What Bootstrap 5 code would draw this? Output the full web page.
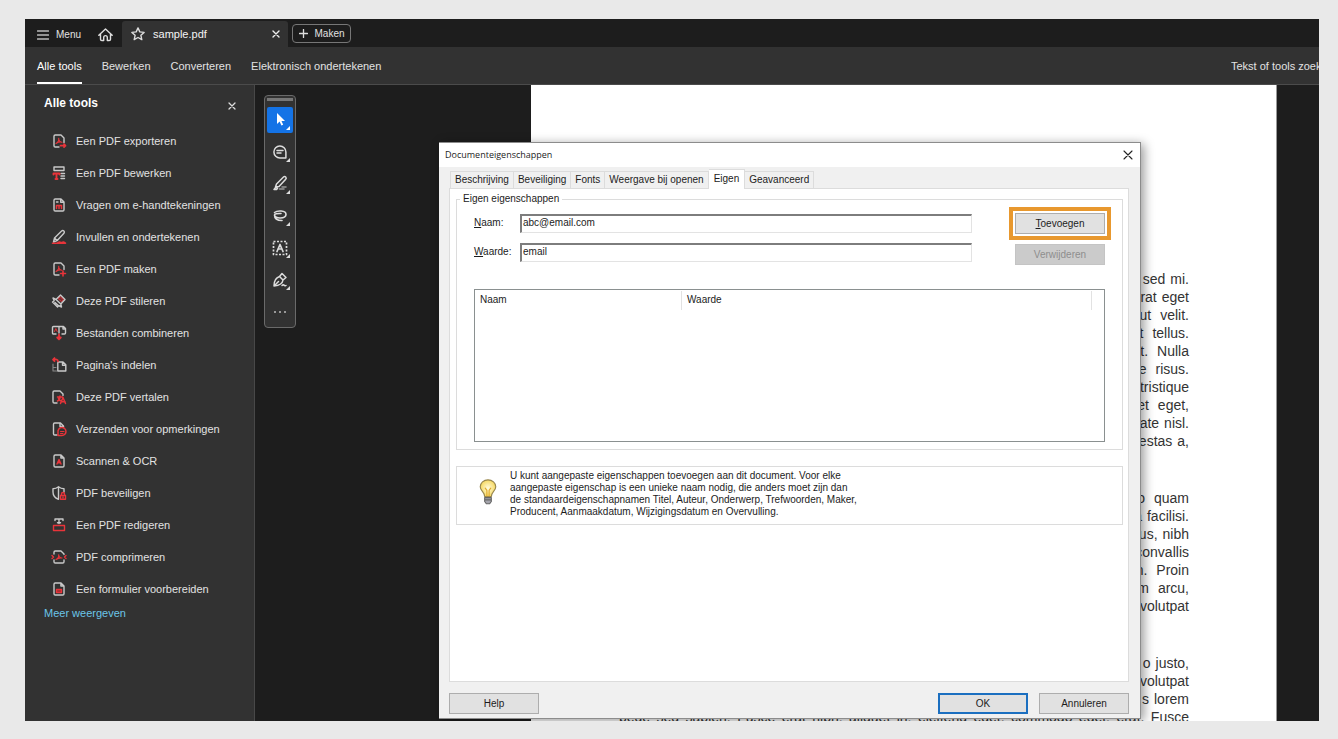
<!DOCTYPE html>
<html lang="nl">
<head>
<meta charset="utf-8">
<meta name="viewport" content="width=device-width, initial-scale=1">
<title>sample.pdf</title>
<link rel="stylesheet" href="https://cdn.jsdelivr.net/npm/bootstrap@5.3.0/dist/css/bootstrap.min.css">
<style>
:root { --panel: #323232; --dark: #1d1d1d; --line: #4b4b4b; --soft: #dcdcdc; }
body { background: #e9e9e9; font-family: "Liberation Sans", Arial, sans-serif; font-size: 11px; line-height: 16px; padding: 19px 19px 18px 25px; color: #e2e2e2; }
button, input { font-family: inherit; }
svg { display: block; flex: none; fill: none; stroke-linecap: round; stroke-linejoin: round; }
.bare { background: none; border: 0; padding: 0; color: inherit; }
a { color: inherit; text-decoration: none; }
.app { background: var(--dark); }
/* window tabs */
.tabstrip { height: 28px; background: var(--dark); font-size: 10px; padding-left: 12px; }
.tabstrip .bare { gap: 7px; }
.doc-tab { width: 166px; height: 26px; background: var(--panel); padding: 0 8px 0 9px; font-size: 11px; color: #f4f4f4; border-radius: 3px 3px 0 0; }
.make-btn { height: 19px; width: 59px; border: 1px solid #777; border-radius: 4px; font-size: 10px; }
/* menu row */
.menurow { height: 38px; background: var(--panel); border-bottom: 1px solid var(--line); padding-left: 12px; gap: 20px; }
.menurow a { padding-top: 11px; height: 37px; white-space: nowrap; }
.menurow a.current { border-bottom: 2px solid #fff; color: #fff; }
.find { width: 88px; padding-top: 11px; overflow: hidden; white-space: nowrap; }
/* tools panel */
.tools { width: 230px; background: var(--panel); border-right: 1px solid #484848; }
.tools-head { padding: 10px 18px 0 19px; height: 40px; }
.tools-head h1 { font-size: 12px; line-height: 16px; font-weight: 700; color: #fff; }
.tools-head .bare { height: 21px; }
.tool { height: 32px; padding-left: 26px; gap: 9px; }
.tool svg { stroke-width: 1.4; }
.more { color: #6cc5e8; padding-left: 19px; }
.g { stroke: #c9c9c9; }
.r { stroke: #e8343a; }
/* quick toolbar */
.quick { top: 10px; left: 9px; width: 32px; border: 1px solid #6a6a6a; background: var(--panel); border-radius: 4px; padding-top: 2px; }
.grip { width: 26px; height: 3px; background: #777; margin-bottom: 6px; }
.quick button { width: 26px; height: 26px; margin-bottom: 6px; }
.quick button:last-child { margin-bottom: 2px; }
.quick button.on { background: #1473e6; border-radius: 2px; }
/* page */
.sheet { margin: 0 42px 0 276px; background: #fff; padding: 185px 87px 0 88px; color: #333; font-size: 14px; line-height: 18px; border-right: 1px solid #999; }
.sheet p { margin-bottom: 39px; white-space: nowrap; }
.sheet .ln { display: flex; justify-content: end; gap: 5px; }
.sheet .w { gap: 9px; }
.sheet .full { display: flex; justify-content: space-between; gap: 0; }
/* dialog */
.dlg { top: 123px; right: 178px; width: 702px; background: #f0f0f0; color: #1c1c1c; font-size: 10px; line-height: 12px; border: 1px solid #8c8c8c; border-left: 0; box-shadow: 3px 2px 10px rgba(0,0,0,.4); }
.dlg-title { height: 24px; background: #fff; padding: 0 7px 0 6px; font-family: "Open Sans", sans-serif; font-size: 9px; }
.dlg-body { padding: 2px 11px 4px 10px; }
.sheet-tabs { height: 19px; padding-left: 1px; }
.sheet-tabs button { height: 17px; border: 1px solid var(--soft); border-width: 1px 1px 0 0; background: #f0f0f0; padding: 0 4px; white-space: nowrap; color: inherit; }
.sheet-tabs button:first-child { border-left-width: 1px; }
.sheet-tabs button.on { height: 20px; margin-bottom: -1px; background: #fff; padding: 0 5px 2px; }
.pane { background: #fff; border: 1px solid var(--soft); padding: 10px 5px 0 6px; height: 494px; }
.group { border: 1px solid var(--soft); height: 251px; position: relative; padding: 14px 17px 0 17px; }
.group .cap { position: absolute; top: -7px; left: 3px; padding: 0 3px; background: #fff; font-size: 10px; line-height: 12px; width: auto; margin: 0; }
.field { height: 18px; margin-bottom: 11px; }
.field label { width: 46px; }
.field input { flex: 1; height: 19px; border: 1px solid #e3e3e3; border-top: 2px solid #7d7d7d; border-left: 2px solid #7d7d7d; padding: 0 1px 2px; font-size: 10px; color: #1c1c1c; border-radius: 0; outline: 0; background: #fff; }
.fields { width: 498px; }
.winbtn { width: 90px; height: 21px; border: 1px solid #adadad; border-radius: 0; background: #e1e1e1; padding: 0; font-size: 10px; color: #1c1c1c; }
.winbtn:disabled { background: #cbcbcb; border-color: #c4c4c4; color: #8e8e8e; }
.winbtn.default { border: 2px solid #1b6fc0; }
.ring { border: 4px solid #e8982e; padding: 2px; margin: -7px -6px 0 0; }
.listbox { border: 1px solid #8a9090; height: 153px; padding: 1px 12px 0 0; margin-top: 17px; }
.listbox th { font-weight: 400; height: 19px; border-right: 1px solid #e2e2e2; padding: 0 5px 2px; }
.listbox .key { width: 33.5%; }
.tip { border: 1px solid var(--soft); margin-top: 16px; height: 59px; padding: 3px 21px; gap: 12px; white-space: nowrap; }
.foot { padding-top: 11px; gap: 11px; }
</style>
</head>
<body class="vh-100 d-flex flex-column overflow-hidden">
<div class="app position-relative flex-grow-1 d-flex flex-column overflow-hidden">
  <header>
    <div class="tabstrip d-flex">
      <button class="bare d-flex align-items-center pt-1"><svg width="12" height="12" viewBox="0 0 12 12" stroke="#bbb" stroke-width="1.3"><path d="M.5 2h11M.5 6h11M.5 10h11"/></svg>Menu</button>
      <button class="bare ms-3 me-2 pt-1" aria-label="Start"><svg width="17" height="16" viewBox="0 0 16 16" stroke="#ddd" stroke-width="1.4"><path d="M1.3 8.2 8 2l6.7 6.2M3 7v5.2c0 .8.5 1.3 1.3 1.300h1.900V10.400a1.800 1.800 0 0 1 3.600 0v3.100h1.900c.8 0 1.300-.5 1.300-1.300V7"/></svg></button>
      <div class="doc-tab d-flex align-items-center mt-auto">
        <svg width="14" height="14" viewBox="0 0 14 14" stroke="#ddd" stroke-width="1.4"><path d="m7 .9 1.800 4 4.300.5-3.200 2.900.9 4.300L7 10.500l-3.800 2.100.9-4.300L.9 5.400l4.300-.5z"/></svg>
        <span class="ms-1 ps-1 flex-grow-1">sample.pdf</span>
        <button class="bare" aria-label="Sluiten"><svg width="8" height="8" viewBox="0 0 8 8" stroke="#eee" stroke-width="1.400"><path d="m1 1 6 6M7 1 1 7"/></svg></button>
      </div>
      <button class="bare make-btn d-flex align-items-center justify-content-center ms-1 mt-auto mb-1"><svg width="9" height="9" viewBox="0 0 8 8" stroke="#ddd" stroke-width="1.200"><path d="M4 .5v7M.5 4h7"/></svg>Maken</button>
    </div>
    <nav class="menurow d-flex">
      <a class="current" href="#">Alle tools</a><a href="#">Bewerken</a><a href="#">Converteren</a><a href="#">Elektronisch ondertekenen</a>
      <span class="find ms-auto">Tekst of tools zoek</span>
    </nav>
  </header>
  <div class="d-flex flex-grow-1 overflow-hidden">
    <aside class="tools flex-shrink-0">
      <div class="tools-head d-flex justify-content-between"><h1 class="mb-0">Alle tools</h1><button class="bare" aria-label="Paneel sluiten"><svg width="8" height="8" viewBox="0 0 8 8" stroke="#ddd" stroke-width="1.300"><path d="m1 1 6 6M7 1 1 7"/></svg></button></div>
      <ul class="list-unstyled mb-0">
        <li><a class="tool d-flex align-items-center" href="#"><svg width="16" height="16" viewBox="0 0 16 16"><path class="g" d="M8 14H4.200A1.200 1.200 0 0 1 3 12.800V3.200A1.200 1.200 0 0 1 4.200 2H10l3 3v4.500"/><path class="r" stroke-width="1.100" d="M5 10.500C7 9.500 8 7 7.700 5.200c-.2 2.300 1.600 4 3.300 4-2-.5-4.300.2-6 1.300"/><path class="r" stroke-width="1.700" d="M9.500 12.700h5m-1.500-1.500 1.500 1.500-1.500 1.500"/></svg>Een PDF exporteren</a></li>
        <li><a class="tool d-flex align-items-center" href="#"><svg width="16" height="16" viewBox="0 0 16 16"><path class="g" d="M3 2h10v3.500H3zM10 8.500h3.500M10 11h3.500M10 13.500h3.500"/><path class="r" stroke-width="1.900" d="M2.500 8.500h6M5.500 8.500v5.500M2.500 8.500v1M8.500 8.500v1M4.500 14h2"/></svg>Een PDF bewerken</a></li>
        <li><a class="tool d-flex align-items-center" href="#"><svg width="16" height="16" viewBox="0 0 16 16"><path class="g" d="M13 5v7.800a1.200 1.200 0 0 1-1.200 1.200H4.200A1.200 1.200 0 0 1 3 12.800V3.200A1.200 1.200 0 0 1 4.200 2H10zM9.700 2v3.300H13M5.500 5H7"/><path class="r" stroke-width="1.500" d="M5.500 8.500h5M5.500 8.500v3M8 8.500v3M10.500 8.500v3"/></svg>Vragen om e-handtekeningen</a></li>
        <li><a class="tool d-flex align-items-center" href="#"><svg width="16" height="16" viewBox="0 0 16 16"><path class="g" d="m2.500 13 1-4L10.600 2a1.500 1.500 0 0 1 2.300 2.200L6 11.700l-3.500 1.300M3.500 9l2.700 2.500"/><path class="r" stroke-width="1.600" d="M1.500 14.200h13l-2-1.200-2.500.8-1.500-.8-2 1"/></svg>Invullen en ondertekenen</a></li>
        <li><a class="tool d-flex align-items-center" href="#"><svg width="16" height="16" viewBox="0 0 16 16"><path class="g" d="M8 14H4.200A1.200 1.200 0 0 1 3 12.800V3.200A1.200 1.200 0 0 1 4.200 2H10l3 3v3.500"/><path class="r" stroke-width="1.100" d="M5 10.500C7 9.500 8 7 7.700 5.200c-.2 2.300 1.600 4 3.300 4-2-.5-4.300.2-6 1.300"/><path class="r" stroke-width="1.600" d="M12 10v5M9.500 12.500h5"/></svg>Een PDF maken</a></li>
        <li><a class="tool d-flex align-items-center" href="#"><svg width="16" height="16" viewBox="0 0 16 16"><path class="r" fill="#7c2d30" stroke-width="1" d="m9.500 4 3 2.700-2 2-3-2.700z"/><path class="g" d="M5 6.500 9.500 2 14 6.500 9.800 11 5 6.500 2 5l1.200 2.700L1.500 9l5 5 1-1.500 3 1.500-.7-3M4 9.500l2.500 2.200"/></svg>Deze PDF stileren</a></li>
        <li><a class="tool d-flex align-items-center" href="#"><svg width="16" height="16" viewBox="0 0 16 16"><path class="g" d="M5 9H2.500a1 1 0 0 1-1-1V2.500a1 1 0 0 1 1-1H8V8M8 1.500h4.500l2 2V8a1 1 0 0 1-1 1H11M12 1.500V4h2.500"/><path class="r" stroke-width="1" d="m3.500 6.500 1.300-3 1.400 3"/><path class="r" stroke-width="1.800" d="M8 9.500V14m-1.800-1.500L8 14.300l1.800-1.800z"/></svg>Bestanden combineren</a></li>
        <li><a class="tool d-flex align-items-center" href="#"><svg width="16" height="16" viewBox="0 0 16 16"><path class="g" d="M7.500 5H12l2.800 2.800V14h-8V5.500M11.500 5v3.200h3"/><path d="M2 7v7h3.500M2 10.500h3" stroke="#888" stroke-width="1.100"/><path class="r" stroke-width="1.700" d="M7 4.500c0-2-2-2.500-4.500-2M3.500 1 2 2.600l1.500 1.600"/></svg>Pagina's indelen</a></li>
        <li><a class="tool d-flex align-items-center" href="#"><svg width="16" height="16" viewBox="0 0 16 16"><path class="g" d="M6 14H3.200A1.200 1.200 0 0 1 2 12.800V3.200A1.200 1.200 0 0 1 3.200 2H9l3 3v1.500"/><path class="r" stroke-width="1.500" d="M6.500 8h5M9 7v1c0 2-1 3.500-2.500 4M7.500 9.500c.5 1.500 2 2.500 3 2.500M9.500 14.500l2.500-6 2.500 6M10.500 12.800H14"/></svg>Deze PDF vertalen</a></li>
        <li><a class="tool d-flex align-items-center" href="#"><svg width="16" height="16" viewBox="0 0 16 16"><path class="g" d="M6 14H3.700a1.200 1.200 0 0 1-1.200-1.200V3.200A1.200 1.200 0 0 1 3.700 2h5.800l3 3v1.500M9 2v3.500h3.500"/><path class="r" stroke-width="1.500" d="M7 14.500V11a4 4 0 1 1 4 3.500z"/><path class="r" stroke-width="1" d="M9.500 10.500H13M9.500 12.500h2.500"/></svg>Verzenden voor opmerkingen</a></li>
        <li><a class="tool d-flex align-items-center" href="#"><svg width="16" height="16" viewBox="0 0 16 16"><path class="g" d="M13 5v7.800a1.200 1.200 0 0 1-1.200 1.200H4.200A1.200 1.200 0 0 1 3 12.800V3.200A1.200 1.200 0 0 1 4.200 2H10zM9.900 2v3H13"/><path class="r" d="m6 11 2-4.500L10 11M6.700 9.700h2.600"/></svg>Scannen &amp; OCR</a></li>
        <li><a class="tool d-flex align-items-center" href="#"><svg width="16" height="16" viewBox="0 0 16 16"><path class="g" d="M7.500 1.800v12.500C4 13 2 10.500 2 7V3.800c2 0 4-.8 5.500-2 1.500 1.200 3.500 2 5.500 2V7"/><path class="r" d="M9.500 10.500h5v3.800h-5zM10.500 10.500V9a1.500 1.500 0 0 1 3 0v1.500M12 12v.8"/></svg>PDF beveiligen</a></li>
        <li><a class="tool d-flex align-items-center" href="#"><svg width="16" height="16" viewBox="0 0 16 16"><path class="g" d="M4 3.500V2h8v1.500M8 2v4.500M6.500 5.800h3"/><path class="r" d="M2.500 8.500h11v5h-11z"/></svg>Een PDF redigeren</a></li>
        <li><a class="tool d-flex align-items-center" href="#"><svg width="16" height="16" viewBox="0 0 16 16"><path class="g" d="M3 5V3.200A1.200 1.200 0 0 1 4.200 2H10l3 3v.5M3 11v1.800A1.200 1.200 0 0 0 4.200 14h7.600a1.200 1.200 0 0 0 1.200-1.200V11"/><path class="r" d="M1 6.500 2.500 8 1 9.500M15 6.500 13.500 8 15 9.500"/><path class="r" stroke-width="1.200" d="M5 10.500C7 9.500 8 7.500 7.700 5.800c-.2 2 1.600 3.200 3.300 3.200-2-.5-4.300.4-6 1.500"/></svg>PDF comprimeren</a></li>
        <li><a class="tool d-flex align-items-center" href="#"><svg width="16" height="16" viewBox="0 0 16 16"><path class="g" d="M13 5v7.800a1.200 1.200 0 0 1-1.200 1.200H4.200A1.200 1.200 0 0 1 3 12.800V3.200A1.200 1.200 0 0 1 4.200 2H10zM9.900 2v3H13"/><path class="r" fill="#9b2d31" d="M5.500 8.500h5v3h-5z"/></svg>Een formulier voorbereiden</a></li>
      </ul>
      <a class="more" href="#">Meer weergeven</a>
    </aside>
    <main class="flex-grow-1 position-relative">
      <div class="quick position-absolute d-flex flex-column align-items-center">
        <div class="grip flex-shrink-0"></div>
        <button class="bare on" aria-label="Selecteren"><svg width="26" height="26" viewBox="0 0 26 26"><path fill="#fff" d="M10 6v11l2.600-2.400 1.800 4 1.800-.8-1.700-3.900H18zM23 19v4h-4z"/></svg></button>
        <button class="bare" aria-label="Opmerking"><svg width="26" height="26" viewBox="0 0 26 26" stroke="#ddd" stroke-width="1.500"><path d="M18.500 19H13a6 6 0 1 1 5.900-6V19zM10 11.500h6M10 14h4"/><path fill="#ddd" stroke="none" d="M23 19v4h-4z"/></svg></button>
        <button class="bare" aria-label="Markeren"><svg width="26" height="26" viewBox="0 0 26 26" stroke="#ddd" stroke-width="1.500"><path d="m8.500 16 1-3L16.500 6a1.500 1.500 0 0 1 2.200 2.200L12 15.500zM7 18.500l2-2.500 1.500 1.500-1 1z"/><path stroke="#999" d="M12.500 18H17M15 16h4"/><path fill="#ddd" stroke="none" d="M23 19v4h-4z"/></svg></button>
        <button class="bare" aria-label="Tekenen"><svg width="26" height="26" viewBox="0 0 26 26" stroke="#ddd" stroke-width="1.600"><path d="M7.500 9.500C10 7.500 19 7 19 11.500c0 4.500-11.500 4.500-11.500.5 0-1.700 3-1.500 6.500-1.500M7.500 12c0 3.500 3 5.500 7.500 5.500"/><path fill="#ddd" stroke="none" d="M23 19v4h-4z"/></svg></button>
        <button class="bare" aria-label="Tekst"><svg width="26" height="26" viewBox="0 0 26 26" stroke="#ddd" stroke-width="1.700"><path stroke-linecap="butt" stroke-dasharray="2 1.500" d="M6.500 6.500h13v13h-13z"/><path d="m10 16.500 3-7 3 7M11 14h4"/><path fill="#ddd" stroke="none" d="M23 19v4h-4z"/></svg></button>
        <button class="bare" aria-label="Ondertekenen"><svg width="26" height="26" viewBox="0 0 26 26" stroke="#ddd" stroke-width="1.500"><path d="M7 19c0-5 1-8 5.500-9.500l3.500 3.500C15.500 17 12.500 18.500 7 19zl4.500-4.500M12.500 9.500 15 6.500l4 4-3 2.500M15 18.500c2-2 2.500 1 4 0"/><path fill="#ddd" stroke="none" d="M23 19v4h-4z"/></svg></button>
        <button class="bare" aria-label="Meer"><svg width="26" height="26" viewBox="0 0 26 26" fill="#bbb"><circle fill="#bbb" cx="8" cy="13" r="1"/><circle fill="#bbb" cx="13" cy="13" r="1"/><circle fill="#bbb" cx="18" cy="13" r="1"/></svg></button>
      </div>
      <article class="sheet">
        <p><span class="ln"><span>sed</span><span>mi.</span></span><span class="ln"><span>rat</span><span>eget</span></span><span class="ln w"><span>ut</span><span>velit.</span></span><span class="ln w"><span>t</span><span>tellus.</span></span><span class="ln w"><span>it.</span><span>Nulla</span></span><span class="ln w"><span>e</span><span>risus.</span></span><span class="ln"><span>tristique</span></span><span class="ln w"><span>et</span><span>eget,</span></span><span class="ln"><span>ate</span><span>nisl.</span></span><span class="ln"><span>estas</span><span>a,</span></span></p>
        <p><span class="ln w"><span>o</span><span>quam</span></span><span class="ln"><span>a</span><span>facilisi.</span></span><span class="ln"><span>us,</span><span>nibh</span></span><span class="ln"><span>convallis</span></span><span class="ln w"><span>n.</span><span>Proin</span></span><span class="ln w"><span>m</span><span>arcu,</span></span><span class="ln"><span>volutpat</span></span></p>
        <p class="mb-0"><span class="ln"><span>o</span><span>justo,</span></span><span class="ln"><span>volutpat</span></span><span class="ln"><span>s</span><span>lorem</span></span><span class="full"><span>pede</span><span>sed</span><span>sapien.</span><span>Fusce</span><span>erat</span><span>nibh,</span><span>aliquet</span><span>in,</span><span>eleifend</span><span>eget,</span><span>commodo</span><span>eget,</span><span>erat.</span><span>Fusce</span></span></p>
      </article>
    </main>
  </div>

  <section class="dlg position-absolute" role="dialog" aria-labelledby="dlgTitle">
    <div class="dlg-title d-flex align-items-center justify-content-between"><span id="dlgTitle">Documenteigenschappen</span><button class="bare" aria-label="Sluiten"><svg width="10" height="10" viewBox="0 0 10 10" stroke="#222" stroke-width="1.100"><path d="m1 1 8 8M9 1 1 9"/></svg></button></div>
    <div class="dlg-body">
      <div class="sheet-tabs d-flex align-items-end" role="tablist">
        <button role="tab">Beschrijving</button><button role="tab">Beveiliging</button><button role="tab">Fonts</button><button role="tab">Weergave bij openen</button><button role="tab" class="on position-relative" aria-selected="true">Eigen</button><button role="tab">Geavanceerd</button>
      </div>
      <div class="pane">
        <fieldset class="group">
          <legend class="cap float-none">Eigen eigenschappen</legend>
          <div class="d-flex justify-content-between">
            <div class="fields">
              <div class="field d-flex align-items-center"><label for="naam"><u>N</u>aam:</label><input id="naam" type="text" value="abc@email.com"></div>
              <div class="field d-flex align-items-center"><label for="waarde"><u>W</u>aarde:</label><input id="waarde" type="text" value="email"></div>
            </div>
            <div class="d-flex flex-column align-items-end">
              <div class="ring"><button class="winbtn d-block"><u>T</u>oevoegen</button></div>
              <button class="winbtn mt-1" disabled>Verwijderen</button>
            </div>
          </div>
          <div class="listbox">
            <table class="w-100"><thead><tr><th class="key">Naam</th><th>Waarde</th></tr></thead></table>
          </div>
        </fieldset>
        <div class="tip d-flex">
          <svg width="20" height="27" viewBox="0 0 18 24" class="mt-2"><defs><radialGradient id="glow"><stop offset="0" stop-color="#fffbe0"/><stop offset="1" stop-color="#f6d860"/></radialGradient></defs><path fill="url(#glow)" stroke="#96854e" d="M6 16.500C6 12.500 2 11.500 2 7.800a7 6.300 0 0 1 14 0c0 3.700-4 4.700-4 8.700z"/><path stroke="#e0a92a" d="M8 16V11L6.500 9M10 16v-5l1.500-2"/><path fill="#a5a5ad" stroke="#666" d="M6 17.500h6v3.500l-1.500 2h-3L6 21zM6 19.500h6"/></svg>
          <p class="mb-0">U kunt aangepaste eigenschappen toevoegen aan dit document. Voor elke<br>aangepaste eigenschap is een unieke naam nodig, die anders moet zijn dan<br>de standaardeigenschapnamen Titel, Auteur, Onderwerp, Trefwoorden, Maker,<br>Producent, Aanmaakdatum, Wijzigingsdatum en Overvulling.</p>
        </div>
      </div>
      <div class="foot d-flex">
        <button class="winbtn me-auto">Help</button><button class="winbtn default">OK</button><button class="winbtn">Annuleren</button>
      </div>
    </div>
  </section>
</div>
<script src="https://cdn.jsdelivr.net/npm/bootstrap@5.3.0/dist/js/bootstrap.bundle.min.js"></script>
</body>
</html>
